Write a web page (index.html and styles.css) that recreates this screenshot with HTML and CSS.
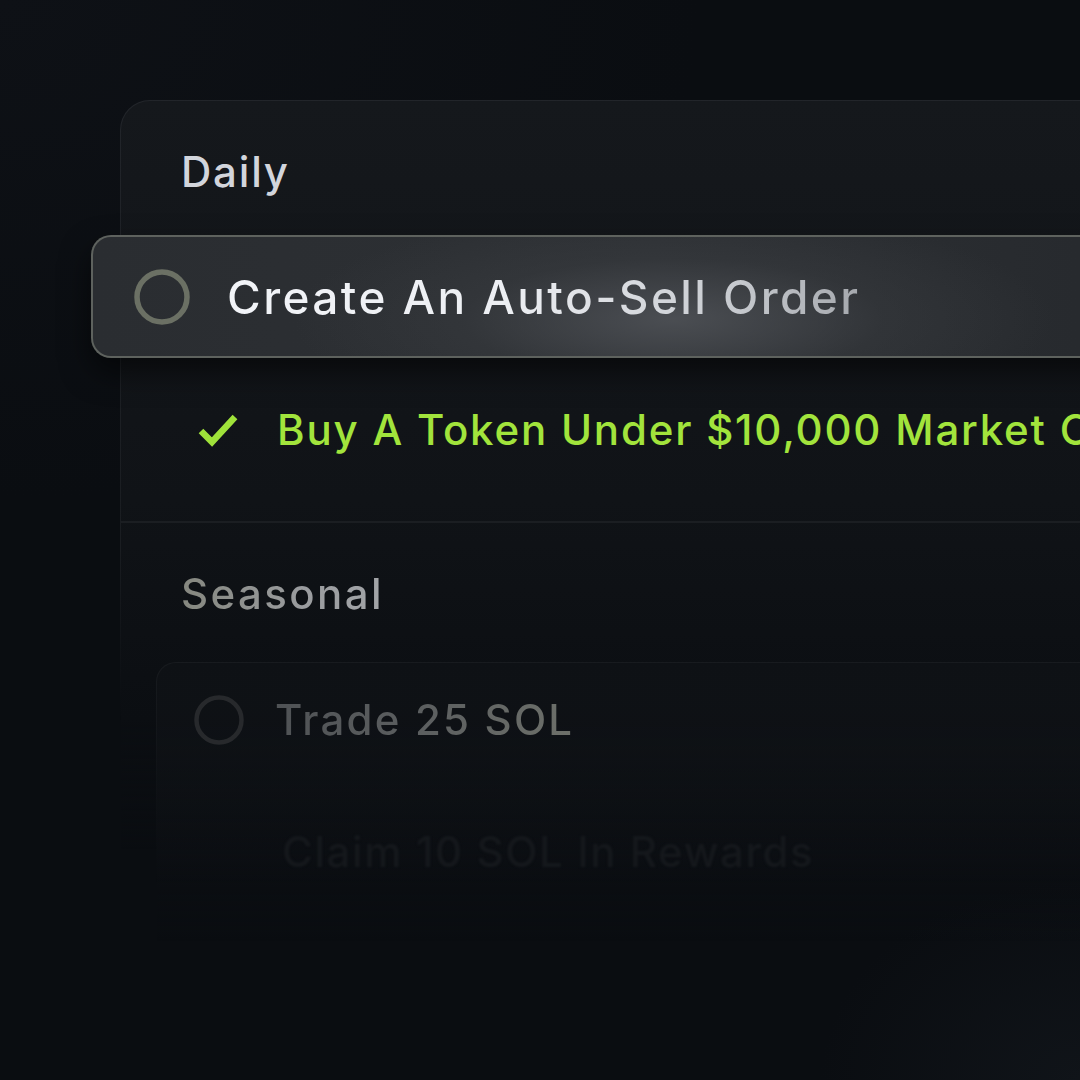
FILE: index.html
```html
<!DOCTYPE html>
<html lang="en">
<head>
<meta charset="utf-8">
<title>Quests</title>
<link rel="stylesheet" href="styles.css">
</head>
<body>
<div class="scene">
  <div class="card">
    <div class="section-title daily">Daily</div>
    <div class="row active">
      <svg class="ring" width="56" height="56" viewBox="0 0 56 56"><circle cx="28" cy="28" r="25" fill="none" stroke="#6b7064" stroke-width="5.5"/></svg>
      <span class="row-text active-text">Create An Auto-Sell Order</span>
    </div>
    <div class="row done">
      <svg class="check" width="40" height="36" viewBox="0 0 40 36"><path d="M3 19 L14 30 L37 5" fill="none" stroke="#9fe23a" stroke-width="6.5" stroke-linecap="butt" stroke-linejoin="miter"/></svg>
      <span class="row-text done-text">Buy A Token Under $10,000 Market Cap</span>
    </div>
    <div class="divider"></div>
    <div class="section-title seasonal">Seasonal</div>
    <div class="subcard">
      <div class="row pending">
        <svg class="ring-dim" width="50" height="50" viewBox="0 0 50 50"><circle cx="25" cy="25" r="22.5" fill="none" stroke="#27292c" stroke-width="4.5"/></svg>
        <span class="row-text pending-text">Trade 25 SOL</span>
      </div>
      <div class="row faded">
        <span class="row-text faded-text">Claim 10 SOL In Rewards</span>
      </div>
    </div>
  </div>
</div>
</body>
</html>
```

FILE: styles.css
```css
html, body {
  margin: 0;
  padding: 0;
}

body {
  width: 1080px;
  height: 1080px;
  overflow: hidden;
  background:
    radial-gradient(ellipse 260px 200px at 1080px 1080px, #101419 0%, rgba(16,20,25,0) 100%),
    radial-gradient(ellipse 700px 500px at 0 0, #0e1116 0%, rgba(14,17,22,0) 100%),
    #0a0d11;
  font-family: Inter, "Noto Sans", "DejaVu Sans", sans-serif;
}

.scene {
  width: 1080px;
  height: 1080px;
  overflow: hidden;
  padding-top: 100px;
  box-sizing: border-box;
}

.card {
  margin-left: 120px;
  width: 1100px;
  height: 1000px;
  box-sizing: border-box;
  border: 1px solid transparent;
  border-right: none;
  border-radius: 30px 0 0 0;
  padding-top: 50px;
  background:
    linear-gradient(180deg, #15181c 0%, #101317 40%, #0b0e12 62%, rgba(11,14,18,0) 75%) padding-box,
    linear-gradient(180deg, #22252a 0%, #1a1d21 45%, rgba(26,29,33,0) 62%) border-box;
}

.section-title {
  font-size: 42px;
  line-height: 42px;
  font-weight: 500;
  padding-left: 60px;
}

.daily {
  color: #d2d5dc;
  letter-spacing: 1.8px;
}

.seasonal {
  margin-top: 50px;
  background: linear-gradient(90deg, #85877f 0%, #9a9c9f 60%, #a3a5a8 100%);
  -webkit-background-clip: text;
  background-clip: text;
  color: transparent;
  width: max-content;
  margin-left: 60px;
  padding-left: 0;
  letter-spacing: 2.4px;
}

.row {
  display: flex;
  align-items: center;
}

.row-text {
  font-weight: 500;
  white-space: nowrap;
}

.active {
  margin-top: 42px;
  margin-left: -30px;
  height: 123px;
  box-sizing: border-box;
  border: 2px solid #5e625e;
  border-right: none;
  border-radius: 20px 0 0 20px;
  padding-left: 41px;
  background:
    radial-gradient(ellipse 380px 110px at 580px 82px, rgba(80,83,88,0.85) 0%, rgba(60,63,67,0.4) 55%, rgba(42,45,49,0) 100%),
    linear-gradient(90deg, #2a2d31 0%, #2d3034 50%, #25282c 100%);
  box-shadow: 0 14px 30px rgba(0,0,0,0.55);
}

.ring {
  flex: none;
}

.active-text {
  margin-left: 37px;
  font-size: 46px;
  line-height: 46px;
  letter-spacing: 2.4px;
  background: linear-gradient(90deg, #f2f4f8 0%, #eceef2 45%, #c7cacf 80%, #a5a8ad 100%);
  -webkit-background-clip: text;
  background-clip: text;
  color: transparent;
}

.done {
  margin-top: 51px;
  padding-left: 77px;
}

.check {
  flex: none;
}

.done-text {
  margin-left: 39px;
  font-size: 42px;
  line-height: 42px;
  color: #a2e43c;
  letter-spacing: 1.8px;
}

.divider {
  margin-top: 70px;
  height: 2px;
  background: #1b1e22;
}

.subcard {
  margin-top: 47px;
  margin-left: 35px;
  border: 1px solid transparent;
  border-right: none;
  border-radius: 20px 0 0 0;
  padding-top: 32px;
  padding-left: 37px;
  height: 400px;
  box-sizing: border-box;
  background:
    linear-gradient(180deg, #0e1115 0%, rgba(12,15,19,0.6) 40%, rgba(11,14,18,0) 70%) padding-box,
    linear-gradient(180deg, #181b1f 0%, rgba(24,27,31,0.4) 30%, rgba(24,27,31,0) 55%) border-box;
}

.ring-dim {
  flex: none;
}

.pending-text {
  margin-left: 31px;
  font-size: 42px;
  line-height: 42px;
  letter-spacing: 2.2px;
  background: linear-gradient(90deg, #4f5255 0%, #5c5f60 50%, #6d706a 100%);
  -webkit-background-clip: text;
  background-clip: text;
  color: transparent;
}

.faded {
  margin-top: 86px;
  padding-left: 88px;
}

.faded-text {
  font-size: 42px;
  line-height: 42px;
  color: #15181c;
  letter-spacing: 1.6px;
  filter: blur(0.8px);
}
```
